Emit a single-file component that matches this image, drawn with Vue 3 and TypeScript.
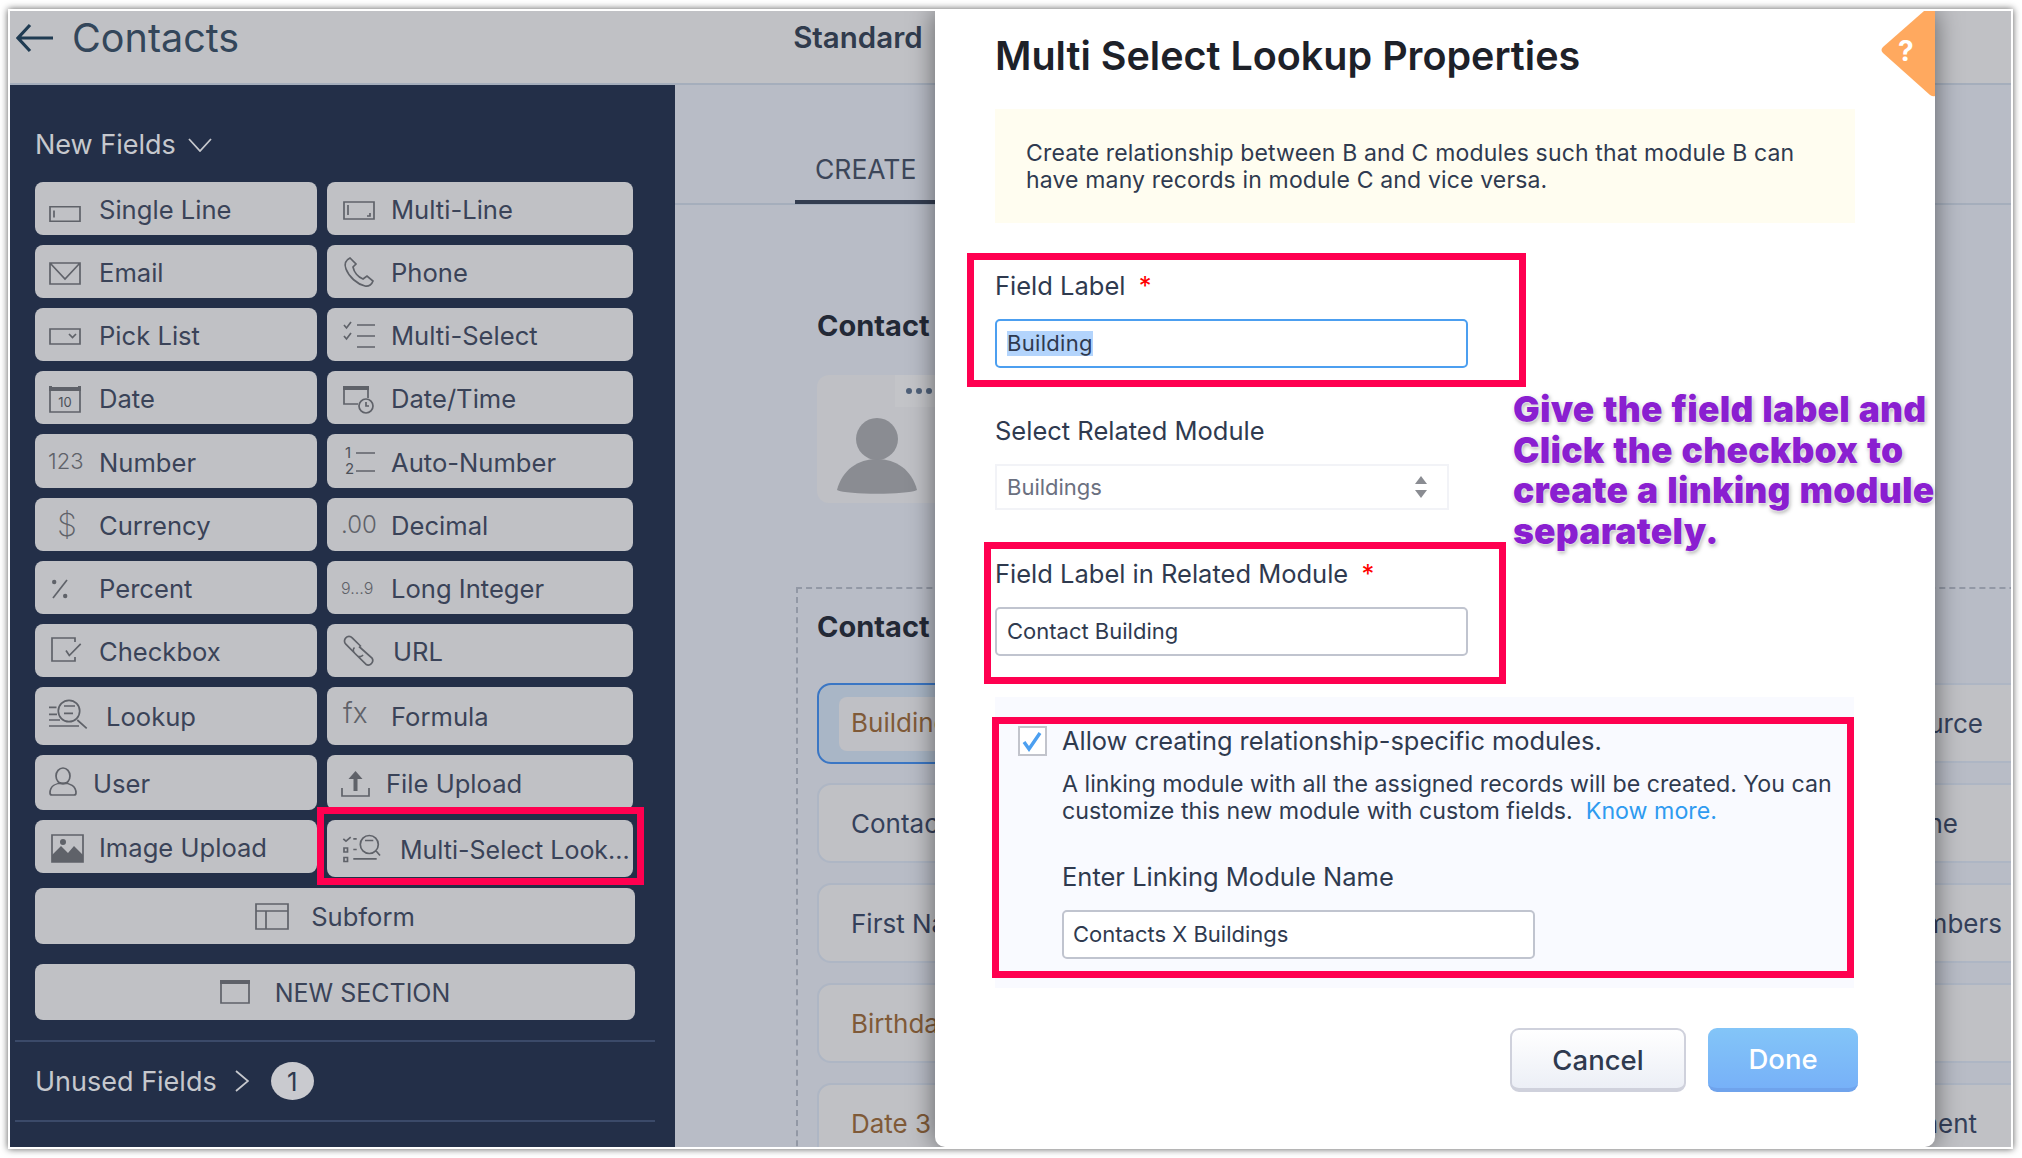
<template>
<div class="page">
<div class="frame">
	<header class="topbar">
		<svg class="back" width="38" height="30" viewBox="0 0 38 30"><path d="M37 15H2M14 2L2 15l12 13" /></svg>
		<span class="module">Contacts</span>
		<span class="layout">Standard</span>
	</header>
	<div class="body">
		<aside class="sidebar">
			<div class="side-title">New Fields
				<svg width="24" height="14" viewBox="0 0 24 14"><path d="M1 1l11 12L23 1" /></svg>
			</div>
			<div class="field-grid">
				<button v-for="f in fields" :key="f.name" class="field" :class="f.cls">
					<span class="slot" :style="{ width: f.slot + 'px' }">
						<span v-if="f.glyph" class="glyph" :class="f.glyphCls">{{ f.glyph }}</span>
						<svg v-else class="ico" :width="icons[f.icon!].w" height="32" :viewBox="`0 0 ${icons[f.icon!].w} 32`">
							<path v-if="icons[f.icon!].fill" class="ico-fill" :d="icons[f.icon!].fill" />
							<path :d="icons[f.icon!].d" />
							<text v-if="f.icon === 'date'" x="16" y="25" text-anchor="middle" class="ico-text">10</text>
							<text v-if="f.icon === 'auto'" x="2" y="13" class="ico-text big">1</text>
							<text v-if="f.icon === 'auto'" x="2" y="29" class="ico-text big">2</text>
						</svg>
					</span>
					<span class="field-name">{{ f.name }}</span>
				</button>
				<button class="field wide subform">
					<svg class="ico" width="34" height="32" viewBox="0 0 34 32"><path d="M1 4h32v25H1zM1 11h32M11 11v18" /></svg>
					Subform
				</button>
				<button class="field wide section-btn">
					<svg class="ico" width="30" height="32" viewBox="0 0 30 32"><path class="ico-fill" d="M0 4h30v4H0z" /><path d="M1 6h28v21H1z" /></svg>
					NEW SECTION
				</button>
			</div>
			<div class="unused">
				Unused Fields
				<svg width="14" height="22" viewBox="0 0 14 22"><path d="M1 1l12 10L1 21" /></svg>
				<span class="badge">1</span>
			</div>
		</aside>

		<main class="canvas">
			<div class="tabs"><span class="tab">CREATE</span></div>
			<h3 class="block-title">Contact</h3>
			<div class="avatar">
				<svg width="82" height="76" viewBox="0 0 82 76"><circle cx="41" cy="21" r="21" /><path d="M1 72C6 52 22 41 41 41s35 11 40 31c-10 5-70 5-80 0z" /></svg>
				<span class="dots"><i></i><i></i><i></i></span>
			</div>
			<section class="form-section">
				<h3 class="block-title">Contact</h3>
				<div class="cards">
					<template v-for="row in rows" :key="row.left">
						<div class="card left" :class="{ selected: row.selected }">
							<span :class="{ brown: row.brown, chip: row.selected }">{{ row.left }}</span>
						</div>
						<div class="card right" :style="{ paddingRight: row.pad + 'px' }">{{ row.right }}</div>
					</template>
				</div>
			</section>
		</main>
	</div>

	<div class="modal">
		<h2 class="modal-title">Multi Select Lookup Properties</h2>
		<svg class="help" width="55" height="86" viewBox="0 0 55 86"><path d="M44 0L3 36q-3 3 0 6l47 42q3 2 5 1V0z" /></svg>
		<span class="help-mark">?</span>
		<p class="info">Create relationship between B and C modules such that module B can<br />have many records in module C and vice versa.</p>

		<label class="lbl first">Field Label <em>*</em></label>
		<div class="input focus"><span class="sel">Building</span></div>

		<label class="lbl">Select Related Module</label>
		<div class="select">Buildings
			<svg width="14" height="24" viewBox="0 0 14 24"><path d="M7 1l6 8H1zM7 23l6-8H1z" /></svg>
		</div>

		<label class="lbl related">Field Label in Related Module <em>*</em></label>
		<div class="input">Contact Building</div>

		<div class="link-box">
			<div class="check-row">
				<span class="check"><svg width="25" height="26" viewBox="0 0 25 26"><path d="M4 14l5 7L20 5" /></svg></span>
				<span class="lbl-inline">Allow creating relationship-specific modules.</span>
			</div>
			<p class="hint">A linking module with all the assigned records will be created. You can<br />customize this new module with custom fields.&nbsp; <a>Know more.</a></p>
			<label class="lbl name-lbl">Enter Linking Module Name</label>
			<div class="input name-input">Contacts X Buildings</div>
		</div>

		<div class="actions">
			<button class="btn cancel">Cancel</button>
			<button class="btn done">Done</button>
		</div>
	</div>

	<div class="mark mark-field"></div>
	<div class="mark mark-label"></div>
	<div class="mark mark-related"></div>
	<div class="mark mark-linking"></div>
	<div class="note">Give the field label and<br />Click the checkbox to<br />create a linking module<br />separately.</div>
</div>
</div>
</template>

<script setup lang="ts">
interface Icon {
	w: number
	d: string
	fill?: string
}
interface Field {
	name: string
	slot: number
	icon?: string
	glyph?: string
	glyphCls?: string
	cls?: string
}

const icons: Record<string, Icon> = {
	single: { w: 32, d: "M1 13.75h30v14.5H1zM5 17.5v7" },
	multi: { w: 32, d: "M1 9h30v17H1zM5 12v10M27 20v3h-3" },
	email: { w: 32, d: "M1 7h30v21H1zM1 7l15 16L31 7" },
	phone: { w: 32, d: "M7 2C3 4 1 8 3 13c3 8 11 15 19 17 4 1 7-2 8-5l-6-5-4 3c-5-2-9-7-10-12l3-3z" },
	pick: { w: 32, d: "M1 10h30v15H1zM20 15l3.5 3.5L27 15" },
	mselect: { w: 32, d: "M14 6h18M14 17h18M14 28h18M1 6l2.5 3L8 3M1 17l2.5 3L8 14" },
	date: { w: 32, d: "M1 7h30v23H1z", fill: "M0 5h32v4H0zM0 4h3v3H0zM29 4h3v3h-3z" },
	datetime: { w: 32, d: "M1 6v16h14M25 6v10M30 24a7 7 0 1 1-14 0a7 7 0 1 1 14 0M23 20v4h3", fill: "M0 4h26v4H0z" },
	auto: { w: 32, d: "M13 8h19M13 26h19" },
	percent: { w: 18, d: "M2 26L16 8", fill: "M1 10a2.2 2.2 0 1 1 4.4 0a2.2 2.2 0 1 1-4.4 0zM12 24a2.2 2.2 0 1 1 4.4 0a2.2 2.2 0 1 1-4.4 0z" },
	checkbox: { w: 32, d: "M26 7V3H3v23h23v-4M17 15.5l3.3 5L31.7 8.8" },
	url: { w: 34, d: "M18 11.5L9.2 2.8A4.5 4.5 0 0 0 2.8 9.2L14 20.5A4 4 0 0 0 20 20M16 11.5L29 23A4.5 4.5 0 0 1 22.8 29.2L11.5 18A4 4 0 0 1 11.5 12.5" },
	lookup: { w: 38, d: "M30.7 11a10.7 10.7 0 1 1-21.4 0a10.7 10.7 0 1 1 21.4 0M15 6h11M15 13.3h9M28.3 20l9.4 8.3M0 7.3h7.5M0 14.3h8M0 20h11M0 26h30" },
	user: { w: 28, d: "M21 9a7 8 0 1 1-14 0a7 8 0 1 1 14 0M1 26c0-7 6-10 13-10s13 3 13 10c0 1-1 2-2 2H3c-1 0-2-1-2-2z" },
	upload: { w: 29, d: "M1 21v8h27v-8", fill: "M14.5 4l7 8h-5v12h-4V12h-5z" },
	image: { w: 33, d: "M1 4h31v27H1z", fill: "M1 31v-7l9-9 7 7 6-7 9 9v7zM9 11a3 3 0 1 0 6 0a3 3 0 1 0-6 0z" },
	mslook: { w: 38, d: "M.3 5.8l2.7 2.4 4.7-4M10.3 5.8h3.4M1 15h3.5v4H1zM10.3 16.5h3.4M1 24.5h3.5v4H1zM10.3 25.8h23.4M35.3 11.5a9 9 0 1 1-18 0a9 9 0 1 1 18 0M22 7.5h8.3M32.7 17.5l4.3 5" }
}

const fields: Field[] = [
	{ name: "Single Line", slot: 50, icon: "single" },
	{ name: "Multi-Line", slot: 48, icon: "multi" },
	{ name: "Email", slot: 50, icon: "email" },
	{ name: "Phone", slot: 48, icon: "phone" },
	{ name: "Pick List", slot: 50, icon: "pick" },
	{ name: "Multi-Select", slot: 48, icon: "mselect" },
	{ name: "Date", slot: 50, icon: "date" },
	{ name: "Date/Time", slot: 48, icon: "datetime" },
	{ name: "Number", slot: 50, glyph: "123", glyphCls: "g-num", cls: "h54" },
	{ name: "Auto-Number", slot: 48, icon: "auto", cls: "h54" },
	{ name: "Currency", slot: 50, glyph: "$", glyphCls: "g-cur" },
	{ name: "Decimal", slot: 48, glyph: ".00", glyphCls: "g-dec" },
	{ name: "Percent", slot: 50, icon: "percent", cls: "nudge" },
	{ name: "Long Integer", slot: 48, glyph: "9…9", glyphCls: "g-long" },
	{ name: "Checkbox", slot: 50, icon: "checkbox" },
	{ name: "URL", slot: 50, icon: "url" },
	{ name: "Lookup", slot: 57, icon: "lookup", cls: "h58" },
	{ name: "Formula", slot: 48, glyph: "fx", glyphCls: "g-fx", cls: "h58" },
	{ name: "User", slot: 44, icon: "user", cls: "h55" },
	{ name: "File Upload", slot: 43, icon: "upload", cls: "h55 up" },
	{ name: "Image Upload", slot: 50, icon: "image", cls: "nudge" },
	{ name: "Multi-Select Look...", slot: 57, icon: "mslook", cls: "h57" }
]

const rows = [
	{ left: "Building", right: "Lead Source", pad: 45, brown: true, selected: true },
	{ left: "Contact", right: "Other Phone", pad: 70, brown: false, selected: false },
	{ left: "First Name", right: "No. of Members", pad: 26, brown: false, selected: false },
	{ left: "Birthday", right: "", pad: 0, brown: true, selected: false },
	{ left: "Date 3", right: "Department", pad: 51, brown: true, selected: false }
]
</script>

<style scoped>
.page {
	width: 2022px;
	height: 1158px;
	padding: 9px 9px 9px 8px;
	box-sizing: border-box;
	font-family: Inter, "Noto Sans", sans-serif;
	color: #2f3a4f;
}
.frame {
	position: relative;
	width: 2005px;
	height: 1140px;
	box-sizing: border-box;
	border: 2px solid #fff;
	box-shadow: 0 0 7px rgba(0, 0, 0, 0.65);
	overflow: hidden;
	display: flex;
	flex-direction: column;
	background: #b8bcc6;
}
.topbar {
	height: 72px;
	flex: none;
	background: #c0c1c5;
	border-bottom: 2px solid #a5aebc;
	display: flex;
	align-items: flex-start;
}
.back {
	margin: 12px 0 0 6px;
	fill: none;
	stroke: #1f3b52;
	stroke-width: 3.2;
}
.module {
	font-size: 39.5px;
	line-height: 46px;
	margin: 4px 0 0 18px;
	color: #33465a;
}
.layout {
	font-size: 29.5px;
	font-weight: 600;
	line-height: 40px;
	margin: 6px 0 0 554px;
	color: #303b4d;
}
.body {
	flex: 1;
	display: flex;
	min-height: 0;
}
.sidebar {
	width: 665px;
	flex: none;
	background: #232f48;
	padding: 0 20px 0 5px;
	box-sizing: border-box;
}
.side-title {
	margin: 43px 0 0 20px;
	height: 34px;
	font-size: 27px;
	line-height: 34px;
	color: #c6c8cd;
	display: flex;
	align-items: center;
	gap: 12px;
}
.side-title svg,
.unused svg {
	fill: none;
	stroke: #c6c8cd;
	stroke-width: 1.8;
}
.field-grid {
	display: grid;
	grid-template-columns: 282px 306px;
	gap: 10px;
	margin: 20px 0 0 20px;
	align-items: start;
}
.field {
	height: 53px;
	border: 0;
	border-radius: 8px;
	background: #c0c1c5;
	color: #3a4358;
	font: inherit;
	font-size: 25.6px;
	display: flex;
	align-items: center;
	padding: 0 0 0 14px;
	white-space: nowrap;
}
.field:nth-child(even) {
	padding-left: 16px;
}
.field-name {
	padding-top: 2px;
}
.h54 {
	height: 54px;
}
.h55 {
	height: 55px;
}
.h57 {
	height: 57px;
	font-size: 25px;
}
.h58 {
	height: 58px;
}
.h58 .field-name {
	padding-top: 0;
}
.slot {
	flex: none;
	display: flex;
	align-items: center;
}
.ico {
	fill: none;
	stroke: #5f6269;
	stroke-width: 1.7;
	overflow: visible;
}
.ico-fill {
	fill: #5f6269;
	stroke: none;
}
.ico-text {
	font-size: 13px;
	fill: #4d5159;
	stroke: none;
}
.ico-text.big {
	font-size: 15px;
}
.glyph {
	color: #5f6269;
	font-weight: 300;
}
.g-num {
	font-size: 22px;
	margin-left: -1px;
}
.g-cur {
	font-size: 32px;
	font-weight: 200;
	margin-left: 8px;
}
.g-dec {
	font-size: 24px;
	margin-left: -2px;
}
.g-long {
	font-size: 16px;
	margin-left: -2px;
}
.g-fx {
	font-size: 28px;
	margin-top: -6px;
}
.nudge .slot svg {
	margin-left: 2px;
}
.up .slot svg {
	margin-left: -2px;
}
.wide {
	grid-column: span 2;
	width: 600px;
	height: 56px;
	justify-content: center;
	gap: 22px;
	padding: 0 !important;
}
.subform {
	margin-top: 1px;
}
.section-btn {
	margin-top: 10px;
	gap: 25px;
	font-size: 25px;
	padding-top: 2px !important;
}
.section-btn svg {
	margin-top: -2px;
}
.unused {
	margin-top: 20px;
	border-top: 2px solid #3b4a69;
	border-bottom: 2px solid #3b4a69;
	height: 78px;
	display: flex;
	align-items: center;
	padding-left: 20px;
	font-size: 27px;
	color: #c6c8cd;
	gap: 18px;
}
.badge {
	width: 43px;
	height: 38px;
	border-radius: 50%;
	background: #c9cacf;
	color: #2f3a4f;
	font-size: 26px;
	display: flex;
	align-items: center;
	justify-content: center;
	margin-left: 4px;
}
.canvas {
	flex: 1;
	min-width: 0;
	overflow: hidden;
}
.tabs {
	height: 118px;
	border-bottom: 2px solid #a5aebc;
	display: flex;
	align-items: flex-end;
	padding-left: 120px;
}
.tab {
	width: 300px;
	height: 58px;
	padding-left: 20px;
	box-sizing: border-box;
	border-bottom: 4px solid #333d50;
	margin-bottom: -1px;
	font-size: 26.5px;
	line-height: 46px;
	color: #3c4659;
}
.block-title {
	margin: 0;
	font-size: 29px;
	font-weight: 700;
	line-height: 40px;
	color: #232936;
}
.canvas > .block-title {
	margin: 101px 0 0 142px;
}
.avatar {
	position: relative;
	margin: 29px 0 0 142px;
	width: 300px;
	height: 128px;
	border-radius: 12px;
	background: #bfc0c5;
}
.avatar svg {
	position: absolute;
	left: 19px;
	top: 43px;
	fill: #8a8c92;
}
.dots {
	position: absolute;
	left: 78px;
	top: 0;
	width: 110px;
	height: 32px;
	background: #c3c4c8;
	display: flex;
	align-items: center;
	gap: 4px;
	padding-left: 11px;
	box-sizing: border-box;
}
.dots i {
	width: 6px;
	height: 6px;
	border-radius: 50%;
	background: #4f6079;
}
.form-section {
	margin: 84px 0 0 121px;
	width: 1400px;
	height: 700px;
	border: 2px dashed #9298a5;
	box-sizing: border-box;
	padding: 18px 0 0 19px;
}
.cards {
	margin-top: 36px;
	display: grid;
	grid-template-columns: 550px 630px;
	column-gap: 33px;
	row-gap: 20px;
}
.card {
	height: 80px;
	box-sizing: border-box;
	border: 2px solid #aeb6c4;
	border-radius: 14px;
	background: #c0c1c5;
	display: flex;
	align-items: center;
	padding-left: 32px;
	font-size: 26px;
	color: #34405a;
}
.card.right {
	justify-content: flex-end;
}
.selected {
	height: 81px;
	margin-bottom: -2px;
	border-color: #3a76c4;
	background: #a9b6c6;
	padding-left: 20px;
}
.chip {
	flex: 1;
	background: #bfc0c5;
	border-radius: 8px;
	height: 54px;
	line-height: 52px;
	padding-left: 12px;
}
.brown {
	color: #7f5a38;
}

.modal {
	position: absolute;
	left: 925px;
	top: 0;
	bottom: 0;
	width: 1000px;
	background: #fff;
	border-radius: 0 0 10px 10px;
	box-shadow: 0 0 26px rgba(0, 0, 0, 0.5);
	overflow: hidden;
	padding: 19px 0 0 60px;
	box-sizing: border-box;
}
.modal-title {
	margin: 0;
	font-size: 39.5px;
	font-weight: 600;
	line-height: 52px;
	color: #1d2129;
}
.help {
	position: absolute;
	right: 0;
	top: 0;
	fill: #ffa95f;
}
.help-mark {
	position: absolute;
	left: 963px;
	top: 22px;
	color: #fff;
	font-size: 28px;
	font-weight: 700;
	line-height: 36px;
}
.info {
	margin: 27px 0 0 0;
	width: 860px;
	height: 114px;
	box-sizing: border-box;
	padding: 31px 0 0 31px;
	background: #fffdf0;
	font-size: 23px;
	letter-spacing: 0.15px;
	line-height: 26.5px;
	color: #2f3a4f;
}
.lbl {
	display: block;
	margin-top: 47px;
	font-size: 25.5px;
	line-height: 32px;
	color: #2f3a4f;
}
.lbl.related {
	margin-top: 48px;
}
.lbl em {
	color: #f00;
	font-style: normal;
	margin-left: 6px;
}
.input {
	margin-top: 17px;
	width: 473px;
	height: 49px;
	box-sizing: border-box;
	border: 2px solid #c0c4cf;
	border-radius: 5px;
	padding-left: 10px;
	font-size: 22px;
	line-height: 45px;
	background: #fff;
	color: #2f3a4f;
}
.input.focus {
	border-color: #4c9ff0;
}
.sel {
	background: #b3d4fc;
	display: inline-block;
	line-height: 25px;
	letter-spacing: 0.3px;
}
.select {
	margin-top: 17px;
	width: 454px;
	height: 46px;
	box-sizing: border-box;
	border: 2px solid #f2f3f7;
	padding: 0 19px 0 10px;
	display: flex;
	align-items: center;
	justify-content: space-between;
	font-size: 22px;
	color: #6b7080;
}
.select svg {
	fill: #8a8c92;
}
.link-box {
	margin: 41px 0 0 0;
	width: 859px;
	height: 291px;
	box-sizing: border-box;
	padding: 28px 0 0 23px;
	background: #f9faff;
}
.check-row {
	display: flex;
	align-items: center;
	gap: 15px;
	height: 32px;
}
.check {
	width: 29px;
	height: 30px;
	box-sizing: border-box;
	border: 2px solid #c2c4cc;
	background: #fff;
	display: block;
}
.check svg {
	fill: none;
	stroke: #4c9ff0;
	stroke-width: 3.4;
	display: block;
}
.lbl-inline {
	font-size: 25.4px;
	padding-bottom: 2px;
}
.hint {
	margin: 14px 0 0 44px;
	font-size: 23.2px;
	line-height: 27px;
	color: #2f3a4f;
}
.hint a {
	color: #2f9bf0;
}
.name-lbl {
	margin: 36px 0 0 44px;
}
.name-input {
	margin-left: 44px;
	padding-left: 9px;
}
.actions {
	margin: 40px 0 0 0;
	width: 863px;
	display: flex;
	justify-content: flex-end;
	gap: 22px;
}
.btn {
	height: 64px;
	border-radius: 9px;
	font: inherit;
	font-size: 27.5px;
	font-weight: 500;
	box-sizing: border-box;
	padding-top: 3px;
}
.cancel {
	width: 176px;
	border: 2px solid #cfd1dc;
	border-bottom-width: 4px;
	background: linear-gradient(#fff, #eceff6);
	color: #2f3a4f;
}
.done {
	width: 150px;
	border: 0;
	border-bottom: 4px solid #6fa3ec;
	background: linear-gradient(#83c5f8, #77b1f8);
	color: #fff;
}

.mark {
	position: absolute;
	border: 7px solid #ff0050;
	box-sizing: border-box;
}
.mark-field {
	left: 307px;
	top: 796px;
	width: 327px;
	height: 78px;
}
.mark-label {
	left: 957px;
	top: 242px;
	width: 559px;
	height: 134px;
}
.mark-related {
	left: 974px;
	top: 531px;
	width: 522px;
	height: 142px;
}
.mark-linking {
	left: 982px;
	top: 706px;
	width: 862px;
	height: 261px;
}
.note {
	position: absolute;
	left: 1503px;
	top: 379px;
	font-size: 35.5px;
	font-weight: 900;
	line-height: 40.7px;
	letter-spacing: 0.2px;
	word-spacing: 1.5px;
	color: #8a1fd0;
	white-space: nowrap;
	text-shadow: 0 0 2px #fff, 0 0 2px #fff, 1px 2px 4px rgba(0, 0, 0, 0.35);
}
</style>

<style>
html, body {
	background: #fff;
}
</style>
